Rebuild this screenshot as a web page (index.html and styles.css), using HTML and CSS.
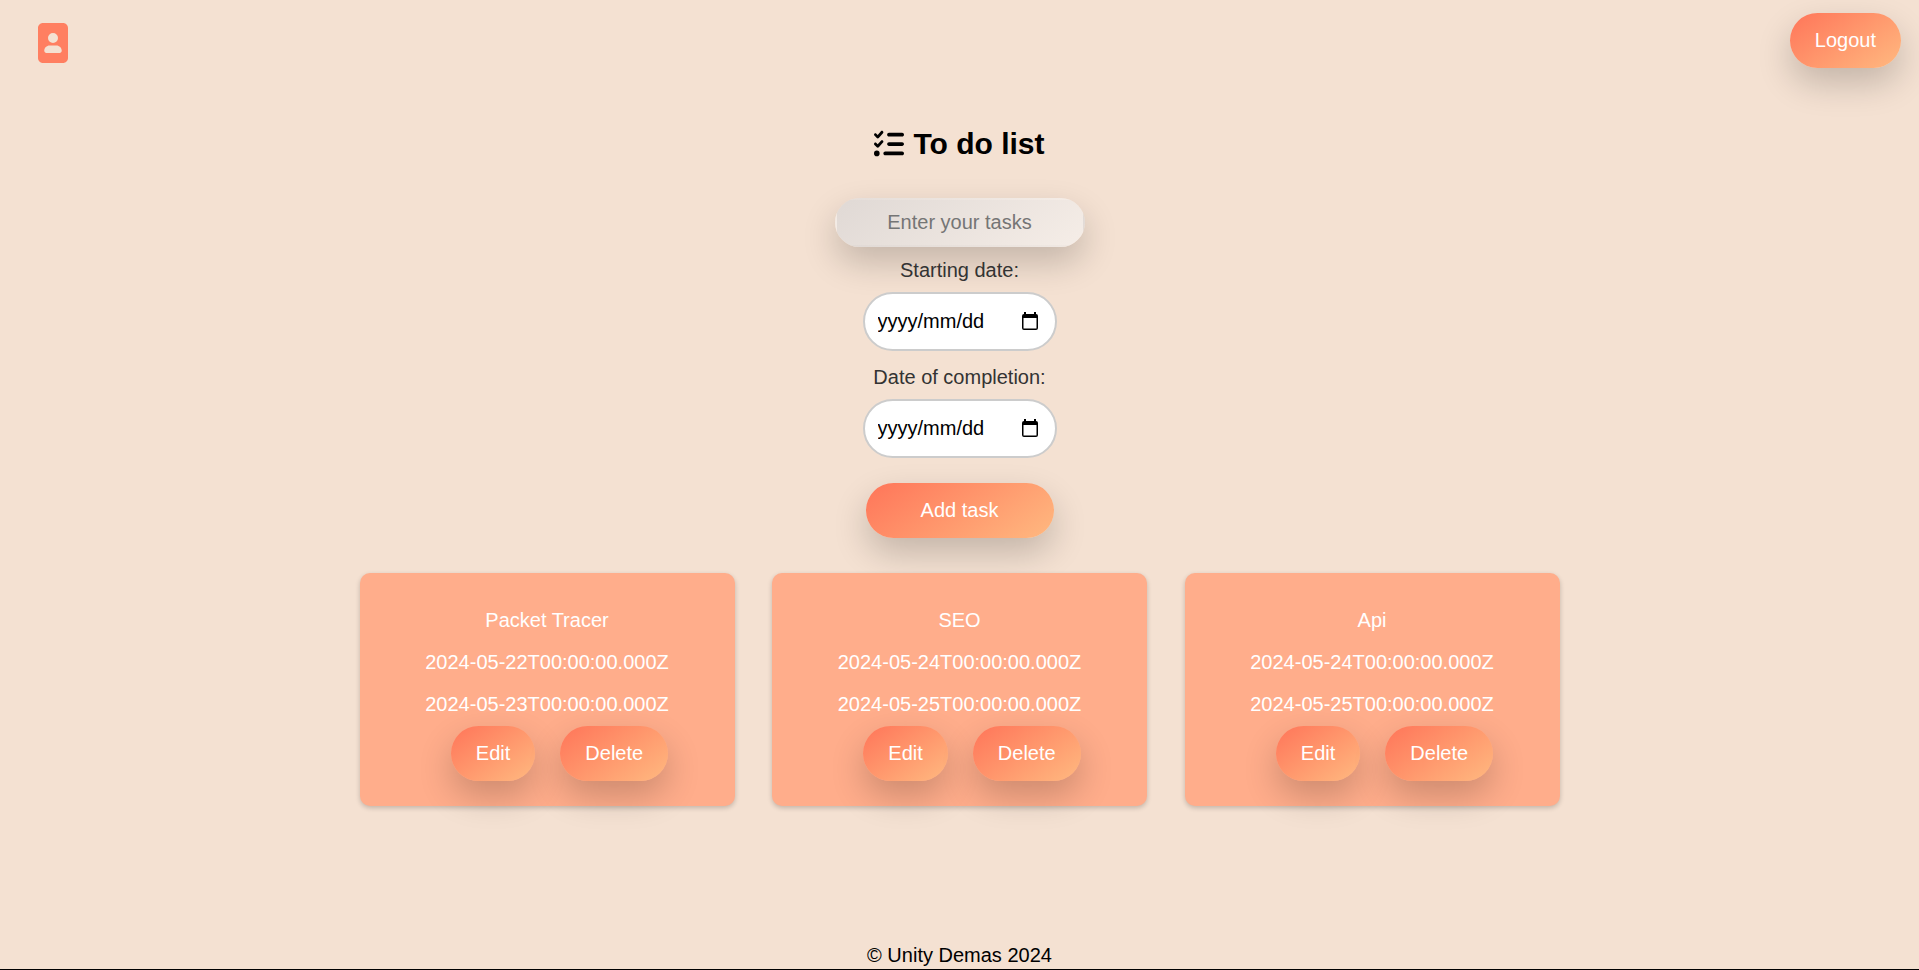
FILE: index.html
```html
<!DOCTYPE html>
<html lang="en">
<head>
<meta charset="utf-8">
<meta name="viewport" content="width=device-width, initial-scale=1">
<title>To do list</title>
<link rel="stylesheet" href="styles.css">
</head>
<body>
<header class="topbar">
  <a class="profile" href="#" aria-label="Profile">
    <svg class="profile-icon" viewBox="0 0 384 512" aria-hidden="true"><path fill="currentColor" d="M384 64c0-35.3-28.7-64-64-64L64 0C28.7 0 0 28.7 0 64L0 448c0 35.3 28.7 64 64 64l256 0c35.3 0 64-28.7 64-64l0-384zM128 192a64 64 0 1 1 128 0 64 64 0 1 1 -128 0zM80 356.6c0-37.9 30.7-68.6 68.6-68.6l86.9 0c37.9 0 68.6 30.7 68.6 68.6c0 15.1-12.3 27.4-27.4 27.4l-169.1 0C92.3 384 80 371.7 80 356.6z"/></svg>
  </a>
  <button class="btn" type="button">Logout</button>
</header>
<main class="content">
  <h1 class="title">
    <svg class="title-icon" viewBox="0 0 512 512" aria-hidden="true"><path fill="currentColor" d="M152.1 38.2c9.9 8.9 10.7 24 1.8 33.9l-72 80c-4.4 4.9-10.6 7.8-17.2 7.9s-12.9-2.4-17.6-7L7 113C-2.3 103.6-2.3 88.4 7 79s24.6-9.4 33.9 0l22.1 22.1 55.1-61.2c8.9-9.9 24-10.7 33.9-1.8zm0 160c9.9 8.9 10.7 24 1.8 33.9l-72 80c-4.4 4.9-10.6 7.8-17.2 7.9s-12.9-2.4-17.6-7L7 273c-9.4-9.4-9.4-24.6 0-33.9s24.6-9.4 33.9 0l22.1 22.1 55.1-61.2c8.9-9.9 24-10.7 33.9-1.8zM224 96c0-17.7 14.3-32 32-32l224 0c17.7 0 32 14.3 32 32s-14.3 32-32 32l-224 0c-17.7 0-32-14.3-32-32zm0 160c0-17.7 14.3-32 32-32l224 0c17.7 0 32 14.3 32 32s-14.3 32-32 32l-224 0c-17.7 0-32-14.3-32-32zM160 416c0-17.7 14.3-32 32-32l288 0c17.7 0 32 14.3 32 32s-14.3 32-32 32l-288 0c-17.7 0-32-14.3-32-32zM48 368a48 48 0 1 1 0 96 48 48 0 1 1 0-96z"/></svg>
    <span>To do list</span>
  </h1>
  <form class="task-form">
    <input class="task-input" type="text" placeholder="Enter your tasks" aria-label="Enter your tasks">
    <label class="date-label" for="start">Starting date:</label>
    <div class="date-field">
      <input class="date-input" id="start" type="text" placeholder="yyyy/mm/dd">
      <button class="date-button" type="button" aria-label="Choose starting date">
        <svg class="date-icon" viewBox="0 0 16 18" aria-hidden="true"><path fill="currentColor" fill-rule="evenodd" d="M2 0h2v2h8V0h2v2a2 2 0 0 1 2 2v12a2 2 0 0 1-2 2H2a2 2 0 0 1-2-2V4a2 2 0 0 1 2-2zM1.500 6v10.500h13V6z"/></svg>
      </button>
    </div>
    <label class="date-label" for="end">Date of completion:</label>
    <div class="date-field">
      <input class="date-input" id="end" type="text" placeholder="yyyy/mm/dd">
      <button class="date-button" type="button" aria-label="Choose date of completion">
        <svg class="date-icon" viewBox="0 0 16 18" aria-hidden="true"><path fill="currentColor" fill-rule="evenodd" d="M2 0h2v2h8V0h2v2a2 2 0 0 1 2 2v12a2 2 0 0 1-2 2H2a2 2 0 0 1-2-2V4a2 2 0 0 1 2-2zM1.500 6v10.500h13V6z"/></svg>
      </button>
    </div>
    <button class="btn btn-add" type="button">Add task</button>
  </form>
  <section class="tasks" aria-label="Tasks">
    <article class="card">
      <p class="card-text">Packet Tracer</p>
      <p class="card-text">2024-05-22T00:00:00.000Z</p>
      <p class="card-text">2024-05-23T00:00:00.000Z</p>
      <div class="card-actions">
        <button class="btn" type="button">Edit</button>
        <button class="btn" type="button">Delete</button>
      </div>
    </article>
    <article class="card">
      <p class="card-text">SEO</p>
      <p class="card-text">2024-05-24T00:00:00.000Z</p>
      <p class="card-text">2024-05-25T00:00:00.000Z</p>
      <div class="card-actions">
        <button class="btn" type="button">Edit</button>
        <button class="btn" type="button">Delete</button>
      </div>
    </article>
    <article class="card">
      <p class="card-text">Api</p>
      <p class="card-text">2024-05-24T00:00:00.000Z</p>
      <p class="card-text">2024-05-25T00:00:00.000Z</p>
      <div class="card-actions">
        <button class="btn" type="button">Edit</button>
        <button class="btn" type="button">Delete</button>
      </div>
    </article>
  </section>
</main>
<footer class="footer">© Unity Demas 2024</footer>
</body>
</html>
```

FILE: styles.css
```css
* {
  box-sizing: border-box;
}

body {
  display: flex;
  flex-direction: column;
  min-height: 100vh;
  margin: 0;
  background: #f4e1d2;
  color: #000;
  font-family: "Liberation Sans", Arial, sans-serif;
  font-size: 20px;
  line-height: 23px;
}

input,
button {
  font: inherit;
}

.topbar {
  display: flex;
  justify-content: space-between;
  align-items: flex-start;
  padding: 13px 18px 0 38px;
}

.profile {
  display: block;
  margin-top: 10px;
  color: #ff7f61;
}

.profile-icon {
  display: block;
  width: 30px;
  height: 40px;
}

.btn {
  padding: 16px 25px;
  border: 0;
  border-radius: 30px;
  background: linear-gradient(145deg, #ff7559, #ffb980);
  box-shadow: 0 15px 35px rgba(0, 0, 0, 0.2);
  color: #fff;
  cursor: pointer;
}

.content {
  display: flex;
  flex-direction: column;
  align-items: center;
  padding: 59px 20px 40px;
}

.title {
  display: flex;
  align-items: center;
  gap: 9px;
  margin: 0 0 37px;
  font-size: 30px;
  line-height: 34px;
}

.title-icon {
  width: 30px;
  height: 30px;
}

.task-form {
  display: flex;
  flex-direction: column;
  align-items: center;
}

.task-input {
  width: 250px;
  padding: 11px 10px;
  border: 2px solid transparent;
  border-radius: 25px;
  background: linear-gradient(145deg, #e0d9d5, #f5ede7);
  box-shadow: 0 15px 35px rgba(0, 0, 0, 0.2);
  text-align: center;
}

.task-input::placeholder {
  color: #757575;
}

.date-label {
  margin: 12px 0 10px;
  color: #333;
}

.date-field {
  display: flex;
  align-items: center;
  width: 194px;
  padding: 16px 17px 16px 13px;
  border: 2px solid #ccc;
  border-radius: 30px;
  background: #fff;
}

.date-field + .date-label {
  margin-top: 15px;
}

.date-input {
  flex: 1;
  min-width: 0;
  padding: 0;
  border: 0;
  background: none;
}

.date-input::placeholder {
  color: #000;
}

.date-button {
  padding: 0 0 2px;
  border: 0;
  background: none;
  color: #000;
}

.date-icon {
  display: block;
  width: 16px;
  height: 18px;
}

.btn-add {
  width: 188px;
  margin-top: 25px;
}

.tasks {
  display: flex;
  flex-wrap: wrap;
  justify-content: space-between;
  width: 100%;
  max-width: 1200px;
  margin-top: 35px;
}

.card {
  width: 375px;
  padding: 36px 25px 25px;
  border-radius: 10px;
  background: #ffad8b;
  box-shadow: 0 2px 5px rgba(0, 0, 0, 0.2);
  color: #fff;
  text-align: center;
}

.card-text {
  margin: 0 0 19px;
}

.card-actions {
  display: flex;
  justify-content: center;
  gap: 25px;
  margin-top: -9px;
  padding-left: 25px;
}

.footer {
  margin-top: auto;
  padding-bottom: 2px;
  border-bottom: 1px solid #000;
  text-align: center;
}
```
